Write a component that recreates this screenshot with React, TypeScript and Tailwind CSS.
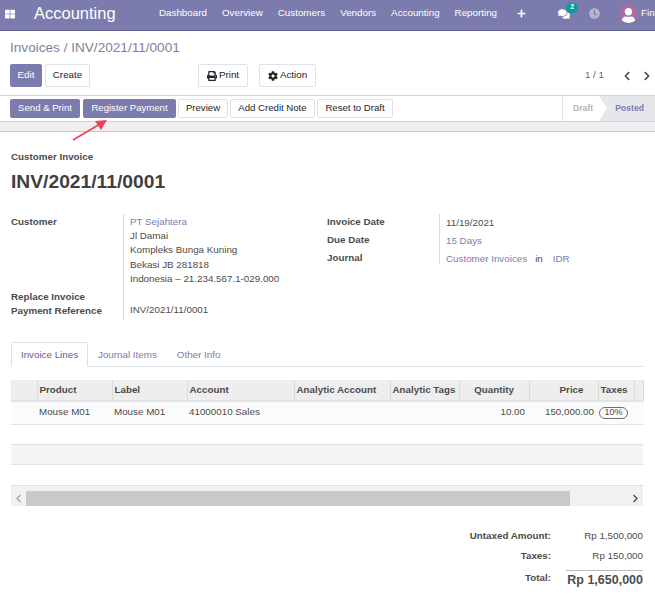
import { FaComments, FaPlus, FaClock, FaUser, FaPrint, FaCog, FaChevronLeft, FaChevronRight, FaThLarge } from "react-icons/fa"

const navItems = ["Dashboard", "Overview", "Customers", "Vendors", "Accounting", "Reporting"]

const columns = [
  { label: "", width: "w-[26px]", align: "text-left" },
  { label: "Product", width: "w-[75px]", align: "text-left" },
  { label: "Label", width: "w-[75px]", align: "text-left" },
  { label: "Account", width: "w-[107px]", align: "text-left" },
  { label: "Analytic Account", width: "w-[96px]", align: "text-left" },
  { label: "Analytic Tags", width: "w-[69px]", align: "text-left" },
  { label: "Quantity", width: "w-[70px]", align: "text-center" },
  { label: "Price", width: "w-[69px]", align: "text-right pr-[14px]" },
  { label: "Taxes", width: "w-[36px]", align: "text-left" },
  { label: "", width: "w-[9px]", align: "text-left" },
]

function Btn({ children, primary, className = "" }: { children: React.ReactNode; primary?: boolean; className?: string }) {
  return (
    <button
      className={
        primary
          ? "flex items-center justify-center rounded-[2px] border border-[#7c7bad] bg-[#7c7bad] text-white " + className
          : "flex items-center justify-center rounded-[2px] border border-[#dee2e6] bg-white text-[#212529] " + className
      }
    >
      {children}
    </button>
  )
}

function Field({ label, className = "" }: { label: string; className?: string }) {
  return <div className={"h-[14px] leading-[14px] font-bold text-[#4c4c4c] " + className}>{label}</div>
}

export default function App() {
  return (
    <div className="relative h-[595px] w-[655px] overflow-hidden bg-white text-[9.8px] text-[#4c4c4c] font-['Liberation_Sans',Arial,sans-serif]">
      <nav className="flex h-[31px] items-center overflow-hidden border-b border-[#65648f] bg-[#7c7bad] pb-[3px] text-white">
        <FaThLarge className="ml-[5px] size-[10px] shrink-0" />
        <span className="ml-[19px] w-[125px] shrink-0 text-[16.5px] leading-none">Accounting</span>
        <div className="flex shrink-0 gap-[15px]">
          {navItems.map((n) => (
            <span key={n}>{n}</span>
          ))}
        </div>
        <FaPlus className="ml-[20px] size-[9px] shrink-0" />
        <div className="relative ml-[32px] shrink-0">
          <FaComments className="size-[12px]" />
          <span className="absolute -top-[5px] left-[8px] flex h-[10px] w-[12px] items-center justify-center rounded-full bg-[#00a09d] text-[7px] font-bold">2</span>
        </div>
        <FaClock className="ml-[19px] size-[11px] shrink-0 text-[#b5b5d0]" />
        <div className="ml-[19px] flex size-[19px] shrink-0 items-end justify-center overflow-hidden rounded-full bg-[#a86ea0]">
          <FaUser className="size-[15px] text-white" />
        </div>
        <span className="ml-[3px] shrink-0 whitespace-nowrap">Finance</span>
      </nav>

      <div className="pl-[10px] pt-[8px] text-[13.6px] leading-[17px] text-[#7f7f9f]">Invoices / INV/2021/11/0001</div>

      <div className="mt-[8px] flex h-[23px] items-stretch pl-[10px] pr-[3px]">
        <Btn primary className="w-[32px]">Edit</Btn>
        <Btn className="ml-[3px] w-[45px]">Create</Btn>
        <Btn className="ml-[108px] w-[50px] gap-[2px]">
          <FaPrint className="size-[10px]" />
          Print
        </Btn>
        <Btn className="ml-[11px] w-[57px] gap-[2px]">
          <FaCog className="size-[10px]" />
          Action
        </Btn>
        <span className="ml-auto flex items-center text-[#5f5f5f]">1 / 1</span>
        <FaChevronLeft className="ml-[18px] size-[10px] self-center text-[#4c4c4c]" />
        <FaChevronRight className="ml-[10px] size-[10px] self-center text-[#4c4c4c]" />
      </div>

      <div className="mt-[8px] flex h-[27px] items-center border-y border-[#d3d3d3] pl-[10px] text-[9.6px]">
        <Btn primary className="h-[19px] w-[70px]">Send &amp; Print</Btn>
        <Btn primary className="ml-[3px] h-[19px] w-[93px]">Register Payment</Btn>
        <Btn className="ml-[2px] h-[19px] w-[50px]">Preview</Btn>
        <Btn className="ml-[2px] h-[19px] w-[85px]">Add Credit Note</Btn>
        <Btn className="ml-[2px] h-[19px] w-[76px]">Reset to Draft</Btn>
        <div className="ml-auto flex h-[25px] items-stretch text-[8.6px] font-bold">
          <div className="flex w-[37px] items-center border-l border-[#e3e3e3] pl-[10px] text-[#b5b5b5]">Draft</div>
          <div className="flex w-[56px] items-center justify-end bg-[#e6e7ea] pr-[11px] text-[#7c7bad] [clip-path:polygon(0_0,100%_0,100%_100%,0_100%,8px_50%)]">Posted</div>
        </div>
      </div>

      <div className="h-[10px] border-b border-[#c8c8c8] bg-[#efefef]" />

      <div className="px-[11px]">
        <div className="mt-[19px] leading-[12px] font-bold text-[#4c4c4c]">Customer Invoice</div>
        <h1 className="mt-[7px] text-[19.25px] leading-[24px] font-bold text-[#3f3f3f]">INV/2021/11/0001</h1>

        <div className="mt-[20px] flex">
          <div className="flex h-[106px] w-[112px] flex-col pt-[1px]">
            <Field label="Customer" />
            <Field label="Replace Invoice" className="mt-[61px]" />
            <Field label="Payment Reference" />
          </div>
          <div className="h-[106px] w-[204px] border-l border-[#d9d9d9] pl-[6px] pt-[1px] leading-[14.2px]">
            <div className="text-[#7c7bad]">PT Sejahtera</div>
            <div>Jl Damai</div>
            <div>Kompleks Bunga Kuning</div>
            <div>Bekasi JB 281818</div>
            <div>Indonesia – 21.234.567.1-029.000</div>
            <div className="mt-[17px]">INV/2021/11/0001</div>
          </div>
          <div className="-mt-[1px] w-[112px] leading-[18px] font-bold">
            <div>Invoice Date</div>
            <div>Due Date</div>
            <div>Journal</div>
          </div>
          <div className="h-[50px] border-l border-[#d9d9d9] pl-[6px] leading-[18px]">
            <div>11/19/2021</div>
            <div className="text-[#7c7bad]">15 Days</div>
            <div className="flex">
              <span className="text-[#7c7bad]">Customer Invoices</span>
              <span className="ml-[8px]">in</span>
              <span className="ml-[10px] text-[#7c7bad]">IDR</span>
            </div>
          </div>
        </div>

        <div className="mt-[22px] flex h-[25px] border-b border-[#dee2e6] text-[#7c7bad]">
          <div className="flex h-[25px] w-[77px] items-center justify-center rounded-t-[2px] border border-b-white border-[#dee2e6] pt-[2px] text-[#5f5e97]">Invoice Lines</div>
          <div className="ml-[10px] flex items-center pt-[2px]">Journal Items</div>
          <div className="ml-[20px] flex items-center pt-[2px]">Other Info</div>
        </div>

        <table className="mt-[13px] w-[632px] table-fixed border-collapse">
          <thead>
            <tr className="h-[21px] border-b-[2px] border-[#e2e4e8] bg-[#eeeeee] font-bold">
              {columns.map((c, i) => (
                <th key={i} className={c.width + " border-r border-[#dcdcdc] px-[2px] font-bold whitespace-nowrap " + c.align}>
                  {c.label}
                </th>
              ))}
            </tr>
          </thead>
          <tbody>
            <tr className="h-[23px] border-b border-[#dee2e6] bg-[#fbfbfb]">
              <td />
              <td className="px-[2px]">Mouse M01</td>
              <td className="px-[2px]">Mouse M01</td>
              <td className="px-[2px]">41000010 Sales</td>
              <td />
              <td />
              <td className="pr-[4px] text-right">10.00</td>
              <td className="pr-[4px] text-right">150,000.00</td>
              <td className="pl-[1px]">
                <span className="flex h-[12px] w-[29px] items-center justify-center rounded-full border border-[#6f6f6f] text-[9px] leading-none">10%</span>
              </td>
              <td />
            </tr>
            <tr className="h-[20px] border-b border-[#dee2e6]"><td colSpan={10} /></tr>
            <tr className="h-[20px] border-b border-[#dee2e6] bg-[#f4f4f4]"><td colSpan={10} /></tr>
            <tr className="h-[21px] border-b border-[#dee2e6]"><td colSpan={10} /></tr>
          </tbody>
        </table>

        <div className="flex h-[20px] w-[632px] flex-col bg-[#f1f1f1]">
          <div className="mt-[5px] flex h-[15px] items-center">
            <FaChevronLeft className="ml-[3px] mr-[3px] size-[9px] text-[#a3a3a3]" />
            <div className="h-full w-[544px] bg-[#c9c9c9]" />
            <FaChevronRight className="ml-auto mr-[3px] size-[9px] text-[#505050]" />
          </div>
        </div>

        <div className="mt-[21px] mr-[1px] ml-auto w-[330px] text-right">
          <div className="flex h-[20px] items-center justify-end">
            <span className="font-bold">Untaxed Amount:</span>
            <span className="w-[92px]">Rp 1,500,000</span>
          </div>
          <div className="flex h-[20px] items-center justify-end">
            <span className="font-bold">Taxes:</span>
            <span className="w-[92px]">Rp 150,000</span>
          </div>
          <div className="flex h-[24px] items-start justify-end">
            <span className="mt-[4px] font-bold">Total:</span>
            <span className="mt-[3px] ml-[15px] w-[77px] border-t border-[#bdbdbd] text-[12.5px] leading-[18px] font-bold whitespace-nowrap">Rp 1,650,000</span>
          </div>
        </div>
      </div>

      <svg className="absolute left-[70px] top-[117px] h-[26px] w-[40px]" viewBox="0 0 40 26">
        <path d="M3 23 L30 7" stroke="#f0415c" strokeWidth="1.6" fill="none" />
        <path d="M37 3 L25 4 L31 13 Z" fill="#f0415c" />
      </svg>
    </div>
  )
}
